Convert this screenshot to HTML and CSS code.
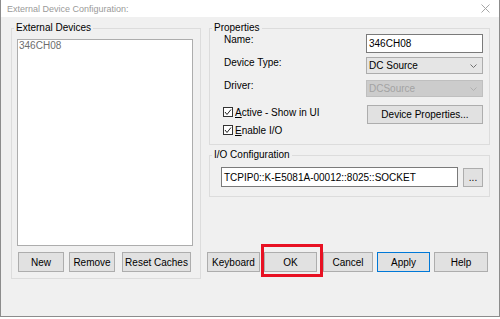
FILE: index.html
```html
<!DOCTYPE html>
<html lang="en">
<head>
    <meta charset="UTF-8">
    <title>External Device Configuration</title>
    <link rel="stylesheet" href="styles.css">
</head>
<body>
    <div class="window">
        <div class="titlebar">
            <span class="title">External Device Configuration:</span>
            <svg class="close" width="9" height="9" viewBox="0 0 9 9">
                <path d="M0.5 0.5 L8.5 8.5 M8.5 0.5 L0.5 8.5" stroke="#a6a6a6" stroke-width="1" fill="none"/>
            </svg>
        </div>

        <div class="content">
            <!-- Lista de dispositivos -->
            <fieldset class="group devices">
                <legend>External Devices</legend>
                <div class="listbox">
                    <div class="list-item">346CH08</div>
                </div>
                <div class="button-row">
                    <button class="btn btn-new">New</button>
                    <button class="btn btn-remove">Remove</button>
                    <button class="btn btn-reset">Reset Caches</button>
                </div>
            </fieldset>

            <div class="right-col">
                <fieldset class="group properties">
                    <legend>Properties</legend>
                    <div class="prop-row row-name">
                        <label>Name:</label>
                        <div class="textbox name-box">346CH08</div>
                    </div>
                    <div class="prop-row row-type">
                        <label>Device Type:</label>
                        <div class="combo">
                            <span>DC Source</span>
                            <svg class="chevron" width="7" height="4" viewBox="0 0 7 4"><path d="M0.5 0.5 L3.5 3.5 L6.5 0.5" stroke="#707070" fill="none"/></svg>
                        </div>
                    </div>
                    <div class="prop-row row-driver">
                        <label>Driver:</label>
                        <div class="combo disabled">
                            <span>DCSource</span>
                            <svg class="chevron" width="7" height="4" viewBox="0 0 7 4"><path d="M0.5 0.5 L3.5 3.5 L6.5 0.5" stroke="#b0b0b0" fill="none"/></svg>
                        </div>
                    </div>
                    <div class="prop-row row-flags">
                        <div class="check-list">
                            <div class="check">
                                <span class="box"><svg width="8" height="8" viewBox="0 0 8 8"><path d="M1 4 L3 6.5 L7 1.5" stroke="#222" stroke-width="1" fill="none"/></svg></span>
                                <span><u>A</u>ctive - Show in UI</span>
                            </div>
                            <div class="check">
                                <span class="box"><svg width="8" height="8" viewBox="0 0 8 8"><path d="M1 4 L3 6.5 L7 1.5" stroke="#222" stroke-width="1" fill="none"/></svg></span>
                                <span><u>E</u>nable I/O</span>
                            </div>
                        </div>
                        <button class="btn btn-props">Device Properties...</button>
                    </div>
                </fieldset>

                <fieldset class="group io">
                    <legend>I/O Configuration</legend>
                    <div class="io-row">
                        <div class="textbox io-box">TCPIP0::K-E5081A-00012::8025::SOCKET</div>
                        <button class="btn btn-dots">...</button>
                    </div>
                </fieldset>

                <div class="dialog-buttons">
                    <button class="btn">Keyboard</button>
                    <span class="ok-wrap">
                        <button class="btn btn-ok">OK</button>
                        <span class="highlight"></span>
                    </span>
                    <button class="btn btn-cancel">Cancel</button>
                    <button class="btn btn-apply">Apply</button>
                    <button class="btn btn-help">Help</button>
                </div>
            </div>
        </div>
    </div>
</body>
</html>
```

FILE: styles.css
```css
body {
    margin: 0;
    background: #fff;
    font-family: "Liberation Sans", Arial, sans-serif;
    font-size: 10px;
    color: #000;
}

.window {
    width: 500px;
    height: 317px;
    box-sizing: border-box;
    border: 1px solid #8c8c8c;
    border-top: none;
    background: #f0f0f0;
    display: flex;
    flex-direction: column;
}

.titlebar {
    height: 17px;
    background: #fff;
    display: flex;
    align-items: center;
    justify-content: space-between;
    padding: 0 9px 0 6px;
}

.title {
    font-size: 9px;
    color: #9a9a9a;
}

.close {
    display: block;
}

.content {
    display: flex;
    gap: 8px;
    padding: 5px 0 0 10px;
}

/* Grupos */
.group {
    margin: 0;
    min-width: 0;
    border: 1px solid #dcdcdc;
    box-sizing: border-box;
}

.group legend {
    padding: 0 2px;
    line-height: 12px;
}

.devices {
    width: 190px;
    height: 257px;
    padding: 5px 7px 0 5px;
}

.devices legend {
    margin-left: -3px;
}

.listbox {
    width: 176px;
    height: 207px;
    box-sizing: border-box;
    border: 1px solid #adadad;
    background: #fff;
    padding: 0 1px;
}

.list-item {
    line-height: 12px;
    color: #6d6d6d;
}

.button-row {
    display: flex;
    gap: 5px;
    margin: 6px 0 0 1px;
}

.btn {
    height: 20px;
    box-sizing: border-box;
    border: 1px solid #adadad;
    background: #e1e1e1;
    font-family: inherit;
    font-size: inherit;
    color: #000;
    padding: 0;
}

.btn-new,
.btn-remove { width: 46px; }
.btn-reset { width: 69px; margin-left: 2px; }

.right-col {
    width: 281px;
    height: 257px;
    display: flex;
    flex-direction: column;
}

.properties {
    height: 123px;
    padding: 0 6px 0 14px;
}

.properties legend {
    margin-left: -12px;
}

.prop-row {
    display: flex;
    justify-content: space-between;
    align-items: flex-start;
}

.prop-row label {
    line-height: 12px;
}

.row-type { margin-top: 4px; }
.row-driver { margin-top: 6px; }
.row-flags { margin-top: 8px; }

.textbox {
    box-sizing: border-box;
    border: 1px solid #7a7a7a;
    background: #fff;
    display: flex;
    align-items: center;
    padding: 0 2px;
    white-space: nowrap;
}

.name-box {
    width: 117px;
    height: 19px;
}

.combo {
    width: 117px;
    height: 17px;
    box-sizing: border-box;
    border: 1px solid #acacac;
    background: #e5e5e5;
    display: flex;
    align-items: center;
    justify-content: space-between;
    padding: 0 5px 0 2px;
}

.combo.disabled {
    background: #cccccc;
    border-color: #bfbfbf;
    color: #a3a3a3;
}

.chevron {
    display: block;
}

.check-list {
    display: flex;
    flex-direction: column;
    gap: 4px;
    margin-left: -1px;
}

.check {
    display: flex;
    align-items: center;
    gap: 2px;
    height: 14px;
}

.check .box {
    width: 10px;
    height: 10px;
    box-sizing: border-box;
    border: 1px solid #333;
    background: #fff;
    display: flex;
    align-items: center;
    justify-content: center;
}

.check .box svg {
    display: block;
}

.btn-props {
    width: 116px;
    height: 19px;
}

.io {
    height: 48px;
    margin-top: 4px;
    padding: 6px 6px 0 11px;
}

.io legend {
    margin-left: -9px;
}

.io-row {
    display: flex;
    gap: 5px;
}

.io-box {
    width: 237px;
    height: 20px;
}

.btn-dots {
    width: 20px;
    height: 19px;
    margin-top: 1px;
}

.dialog-buttons {
    display: flex;
    gap: 4px;
    margin: auto 0 7px -2px;
}

.dialog-buttons .btn { width: 53px; }
.dialog-buttons .btn-cancel { width: 50px; }
.dialog-buttons .btn-help { width: 54px; }
.dialog-buttons .btn-apply { border-color: #0078d7; }

.ok-wrap {
    position: relative;
    display: flex;
    margin-right: 2px;
}

.highlight {
    position: absolute;
    left: -3px;
    top: -8px;
    width: 62px;
    height: 33px;
    box-sizing: border-box;
    border: 3px solid #e81123;
}
```
